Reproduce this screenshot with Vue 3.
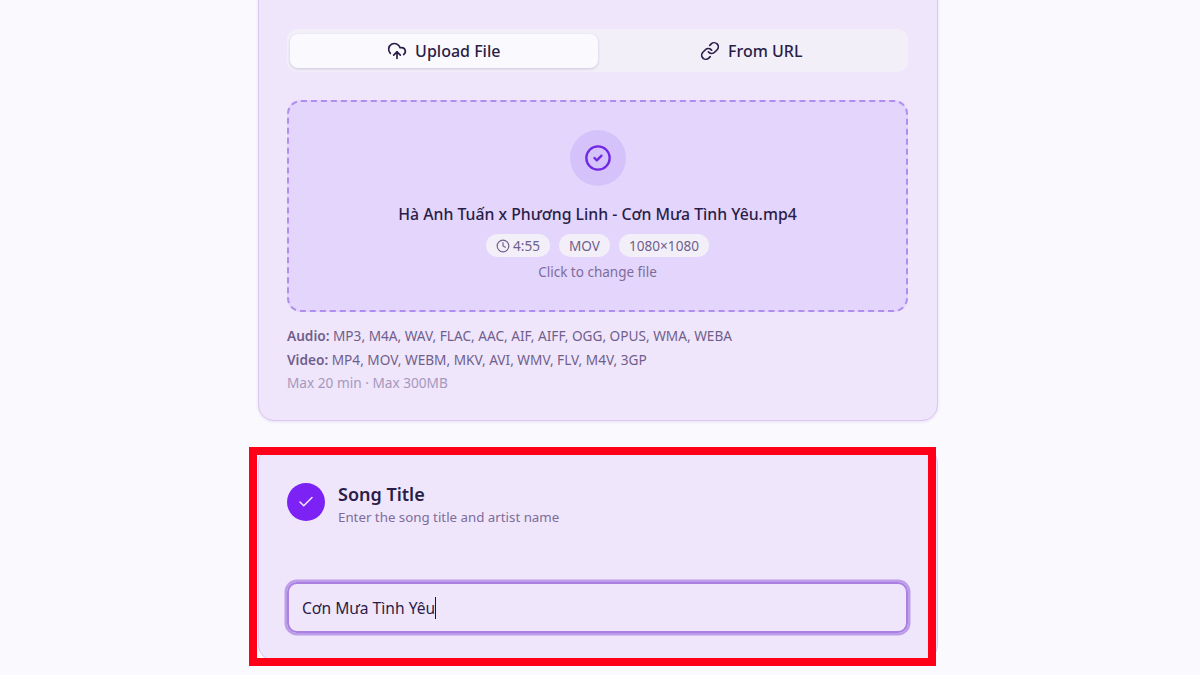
<template>
  <div class="page">
    <section class="card upload-card">
      <div class="tabs">
        <button class="tab active">
          <svg viewBox="0 0 24 24" class="tab-icon"><path d="M12 13v8" /><path d="M4 14.899A7 7 0 1 1 15.71 8h1.79a4.5 4.5 0 0 1 2.5 8.242" /><path d="m8 17 4-4 4 4" /></svg>
          Upload File
        </button>
        <button class="tab">
          <svg viewBox="0 0 24 24" class="tab-icon"><path d="M10 13a5 5 0 0 0 7.54.54l3-3a5 5 0 0 0-7.07-7.07l-1.72 1.71" /><path d="M14 11a5 5 0 0 0-7.54-.54l-3 3a5 5 0 0 0 7.07 7.07l1.71-1.71" /></svg>
          From URL
        </button>
      </div>

      <div class="dropzone">
        <div class="drop-icon">
          <svg viewBox="0 0 24 24"><circle cx="12" cy="12" r="10" /><path d="m9 12 2 2 4-4" /></svg>
        </div>
        <div class="file-name">Hà Anh Tuấn x Phương Linh - Cơn Mưa Tình Yêu.mp4</div>
        <div class="chips">
          <span class="chip">
            <svg viewBox="0 0 24 24"><circle cx="12" cy="12" r="10" /><path d="M12 6v6l4 2" /></svg>
            4:55
          </span>
          <span class="chip">MOV</span>
          <span class="chip">1080×1080</span>
        </div>
        <div class="change">Click to change file</div>
      </div>

      <div class="formats">
        <p><b>Audio:</b> MP3, M4A, WAV, FLAC, AAC, AIF, AIFF, OGG, OPUS, WMA, WEBA</p>
        <p><b>Video:</b> MP4, MOV, WEBM, MKV, AVI, WMV, FLV, M4V, 3GP</p>
        <p class="limits">Max 20 min · Max 300MB</p>
      </div>
    </section>

    <section class="card title-card">
      <div class="step">
        <div class="step-check">
          <svg viewBox="0 0 24 24"><path d="M20 6 9 17l-5-5" /></svg>
        </div>
        <div class="step-text">
          <h2>Song Title</h2>
          <p>Enter the song title and artist name</p>
        </div>
      </div>
      <div class="input">Cơn Mưa Tình Yêu<span class="caret"></span></div>
    </section>

    <!-- red highlight drawn over the second card -->
    <div class="highlight"></div>
  </div>
</template>

<script setup>
</script>

<style>
html,
body {
  margin: 0;
  background: #faf9fe;
}
</style>

<style scoped>
.page {
  position: relative;
  height: 675px;
  overflow: hidden;
  background: #faf9fe;
  font-family: "Noto Sans", "Liberation Sans", sans-serif;
  color: #2a1d47;
  display: flex;
  flex-direction: column;
  align-items: center;
}

.card {
  box-sizing: border-box;
  width: 680px;
  flex: none;
  margin-left: -4px;
  background: #efe6fb;
  border: 1px solid #d9c8f3;
  border-radius: 16px;
  padding: 28px 29px 28px 28px;
}

.upload-card {
  margin-top: -30px;
  height: 451px;
  padding-top: 58px;
  box-shadow: 0 1px 3px rgba(90, 50, 160, 0.12);
}

.title-card {
  margin-top: 26px;
  height: 214px;
}

.tabs {
  display: flex;
  height: 43px;
  box-sizing: border-box;
  padding: 5px 3px 4px;
  background: #f3eff9;
  border-radius: 10px;
}

.tab {
  flex: 1;
  display: flex;
  align-items: center;
  justify-content: center;
  gap: 8px;
  border: none;
  background: none;
  border-radius: 8px;
  font: 500 16px "Noto Sans", sans-serif;
  color: #2a1d47;
  padding: 0;
}

.tab.active {
  background: #faf9fd;
  box-shadow: 0 1px 3px rgba(60, 30, 110, 0.2);
}

.tab-icon {
  width: 20px;
  height: 20px;
  fill: none;
  stroke: #2a1d47;
  stroke-width: 2;
  stroke-linecap: round;
  stroke-linejoin: round;
}

.dropzone {
  box-sizing: border-box;
  height: 212px;
  margin-top: 28px;
  padding-top: 28px;
  border: 2px dashed #b08ef0;
  border-radius: 14px;
  background: #e4d5fc;
  display: flex;
  flex-direction: column;
  align-items: center;
}

.drop-icon {
  width: 56px;
  height: 56px;
  border-radius: 50%;
  background: #d5c2fa;
  display: flex;
  align-items: center;
  justify-content: center;
}

.drop-icon svg {
  width: 28px;
  height: 28px;
  fill: none;
  stroke: #7028e4;
  stroke-width: 2;
  stroke-linecap: round;
  stroke-linejoin: round;
}

.file-name {
  margin-top: 16px;
  font-size: 15.8px;
  line-height: 24px;
  font-weight: 500;
}

.chips {
  display: flex;
  gap: 9px;
  margin-top: 8px;
}

.chip {
  display: flex;
  align-items: center;
  gap: 3px;
  height: 23px;
  padding: 0 10px;
  border-radius: 12px;
  background: #f3eff9;
  font-size: 13.6px;
  color: #6f5f8c;
}

.chip svg {
  width: 14px;
  height: 14px;
  fill: none;
  stroke: #6f5f8c;
  stroke-width: 2;
  stroke-linecap: round;
  stroke-linejoin: round;
}

.change {
  margin-top: 5px;
  font-size: 13.5px;
  line-height: 20px;
  color: #7d6d9a;
}

.formats {
  margin-top: 12px;
  font-size: 13.65px;
  line-height: 23.5px;
  color: #6f5f8c;
}

.formats p {
  margin: 0;
}

.formats b {
  font-weight: 600;
}

.formats .limits {
  color: #a698bd;
}

.step {
  display: flex;
  align-items: center;
  gap: 13px;
}

.step-check {
  width: 38px;
  height: 38px;
  border-radius: 50%;
  background: #7c22f5;
  display: flex;
  align-items: center;
  justify-content: center;
}

.step-check svg {
  width: 18px;
  height: 18px;
  fill: none;
  stroke: #f3e9ff;
  stroke-width: 2;
  stroke-linecap: round;
  stroke-linejoin: round;
}

.step-text {
  margin-top: 6px;
}

.step h2 {
  margin: 0;
  font-size: 18px;
  line-height: 24px;
  font-weight: 600;
}

.step p {
  margin: 0;
  font-size: 13.3px;
  line-height: 22px;
  color: #7d6d9a;
}

.input {
  box-sizing: border-box;
  height: 51px;
  margin-top: 54px;
  padding: 0 13px;
  display: flex;
  align-items: center;
  border: 2px solid #a97fe2;
  border-radius: 10px;
  box-shadow: 0 0 0 2.5px #bd9dea;
  font-size: 15.6px;
  color: #2a1d47;
}

.caret {
  width: 1px;
  height: 22px;
  background: #1a1a1a;
}

.highlight {
  position: absolute;
  left: 249px;
  top: 447px;
  width: 687px;
  height: 219px;
  box-sizing: border-box;
  border: 8px solid #ff0018;
}
</style>
